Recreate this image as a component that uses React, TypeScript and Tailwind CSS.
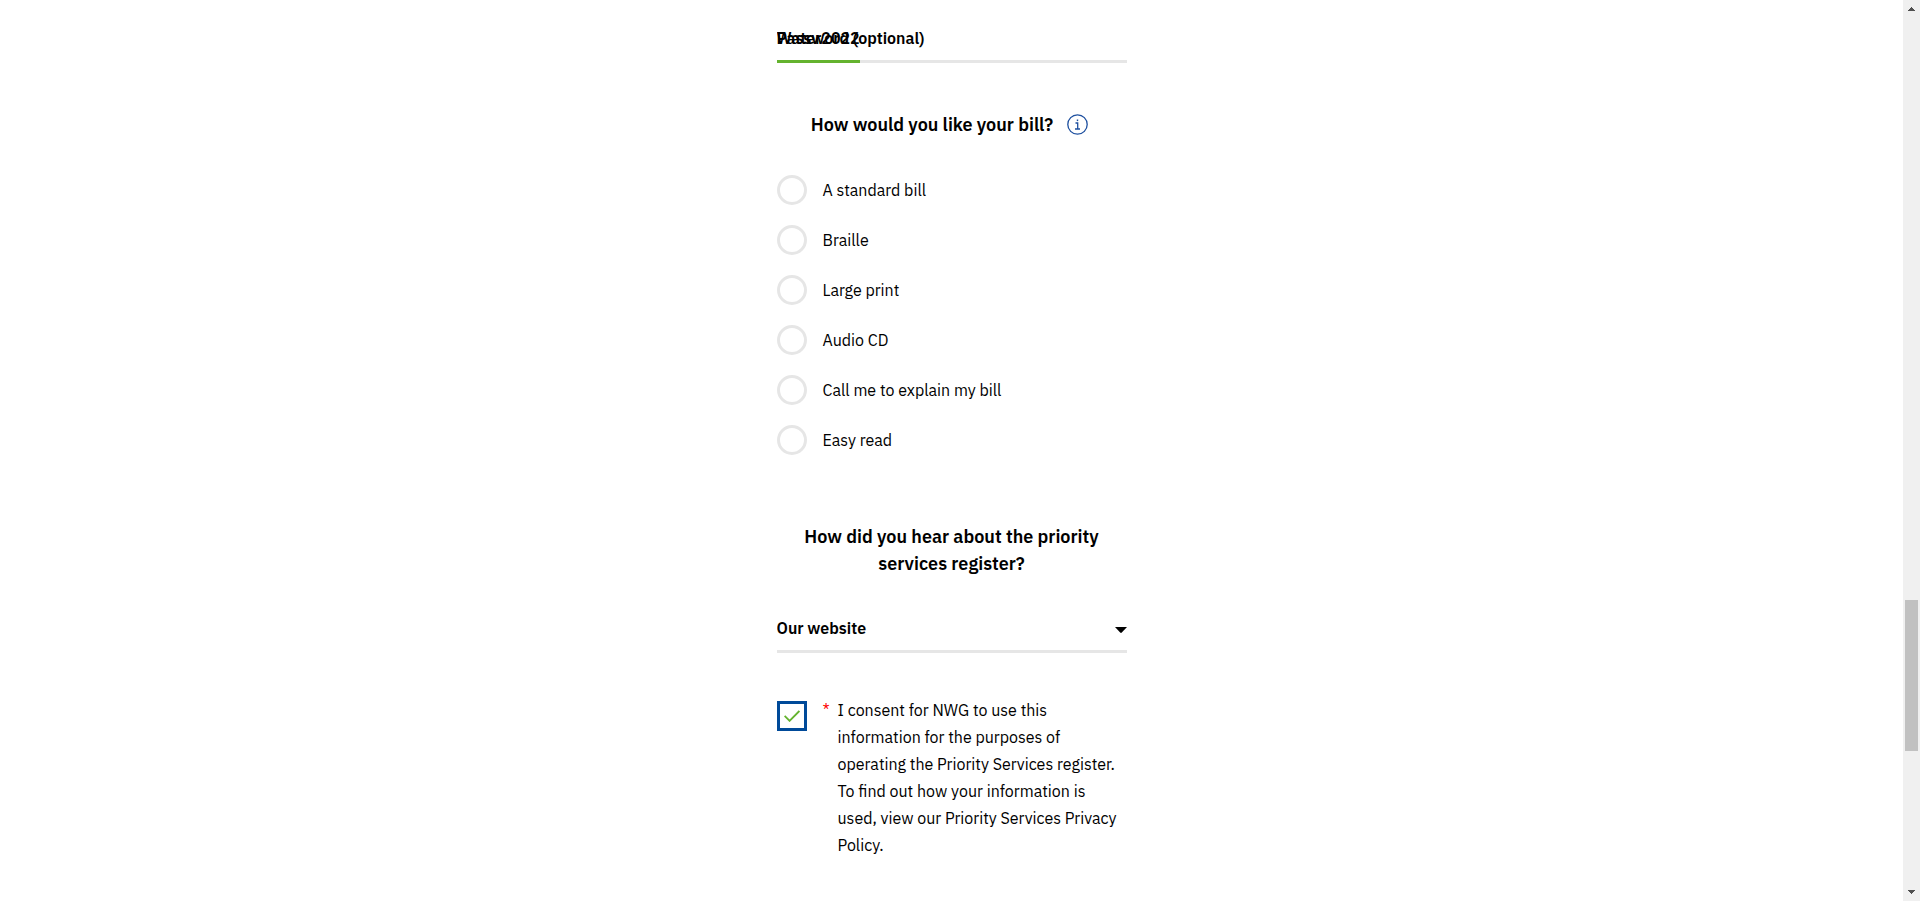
import { useState } from "react";

const BILL_OPTIONS = [
  "A standard bill",
  "Braille",
  "Large print",
  "Audio CD",
  "Call me to explain my bill",
  "Easy read",
];

const SOURCES = ["Our website", "A friend or relative", "Social media", "A leaflet"];

function PasswordField() {
  const [value, setValue] = useState("Water2022");
  return (
    <div className="relative flex h-[38px] w-full border-b-3 border-[#e6e6e6]">
      <label
        htmlFor="password"
        className="pointer-events-none absolute top-0 left-0 text-base leading-[27px] font-semibold"
      >
        Password (optional)
      </label>
      <input
        id="password"
        type="text"
        value={value}
        onChange={(e) => setValue(e.target.value)}
        className="-mb-[3px] h-[38px] w-[83px] border-b-3 border-[#64b32e] bg-transparent pb-2.5 text-base leading-[27px] font-semibold outline-none"
      />
    </div>
  );
}

function InfoButton() {
  return (
    <button type="button" aria-label="More about bill formats" className="size-[21px] shrink-0">
      <svg viewBox="0 0 21 21" className="size-full" fill="none" stroke="#1d4f9f" strokeWidth="1.3">
        <circle cx="10.5" cy="10.5" r="9.7" />
        <path d="M8.5 9h2.2v6M8 15h5" />
        <path d="M9.8 6.3h1.4" strokeWidth="1.6" />
      </svg>
    </button>
  );
}

function BillFormat() {
  const [selected, setSelected] = useState("");
  return (
    <fieldset className="mt-12 w-full">
      <legend className="flex w-full items-center justify-center gap-3.5 pr-1 text-lg leading-[27px] font-semibold">
        How would you like your bill?
        <InfoButton />
      </legend>
      <div className="mt-[37px] flex flex-col gap-5">
        {BILL_OPTIONS.map((option) => (
          <label key={option} className="flex items-center gap-4 text-base leading-[27px]">
            <input
              type="radio"
              name="bill-format"
              checked={selected === option}
              onChange={() => setSelected(option)}
              className="size-[30px] shrink-0 appearance-none rounded-full border-3 border-[#e6e6e6] bg-white checked:border-[#004a99]"
            />
            {option}
          </label>
        ))}
      </div>
    </fieldset>
  );
}

function SourceSelect() {
  return (
    <section className="mt-[68px] w-full">
      <h2 className="px-4 text-center text-lg leading-[27px] font-semibold">
        <label htmlFor="source">How did you hear about the priority services register?</label>
      </h2>
      <div className="mt-[35px] grid items-start border-b-3 border-[#e6e6e6]">
        <select
          id="source"
          defaultValue="Our website"
          className="col-start-1 row-start-1 h-[38px] w-full appearance-none bg-transparent pb-1.5 text-base font-semibold outline-none"
        >
          {SOURCES.map((source) => (
            <option key={source}>{source}</option>
          ))}
        </select>
        <svg
          viewBox="0 0 12 6"
          className="pointer-events-none col-start-1 row-start-1 mt-[15px] h-1.5 w-3 justify-self-end"
        >
          <path d="M0 0h12L6.8 5.6Q6 6.4 5.2 5.6Z" />
        </svg>
      </div>
    </section>
  );
}

function Consent() {
  const [checked, setChecked] = useState(true);
  return (
    <div className="mt-11 flex w-full items-start gap-4">
      <span className="mt-1 grid shrink-0 place-items-center">
        <input
          id="consent"
          type="checkbox"
          checked={checked}
          onChange={(e) => setChecked(e.target.checked)}
          className="peer col-start-1 row-start-1 size-[30px] appearance-none border-3 border-[#004a99] bg-white"
        />
        <svg
          viewBox="0 0 16 12"
          className="pointer-events-none invisible col-start-1 row-start-1 h-3 w-4 peer-checked:visible"
          fill="none"
          stroke="#64b32e"
          strokeWidth="1.9"
        >
          <path d="M.6 5.8 5.6 10.8 15.4 1" />
        </svg>
      </span>
      <label htmlFor="consent" className="flex text-base leading-[27px]">
        <span className="w-[15px] shrink-0 text-[#ff0000]">*</span>
        <span>
          I consent for NWG to use this information for the purposes of operating the Priority
          Services register. To find out how your information is used, view our Priority Services
          Privacy Policy.
        </span>
      </label>
    </div>
  );
}

function ScrollRail() {
  return (
    <div aria-hidden="true" className="sticky top-0 flex h-screen w-[17px] shrink-0 flex-col bg-[#f0f0f0]">
      <svg viewBox="0 0 17 17" className="h-[17px] w-full shrink-0" fill="#505050" shapeRendering="crispEdges">
        <path d="M8 7h1v1h1v1h1v1h1v1H5v-1h1V9h1V8h1z" />
      </svg>
      <div className="flex-[583]" />
      <div className="mx-0.5 flex-[151] bg-[#c1c1c1]" />
      <div className="flex-[133]" />
      <svg viewBox="0 0 17 17" className="h-[17px] w-full shrink-0" fill="#505050" shapeRendering="crispEdges">
        <path d="M5 6h7v1h-1v1h-1v1H9v1H8V9H7V8H6V7H5z" />
      </svg>
    </div>
  );
}

export default function App() {
  return (
    <div className="flex min-h-screen bg-white font-['IBM_Plex_Sans','Roboto',sans-serif] text-black">
      <main className="flex flex-1 justify-center">
        <form className="flex w-full max-w-[350px] flex-col items-center pt-[25px]">
          <PasswordField />
          <BillFormat />
          <SourceSelect />
          <Consent />
        </form>
      </main>
      <ScrollRail />
    </div>
  );
}
